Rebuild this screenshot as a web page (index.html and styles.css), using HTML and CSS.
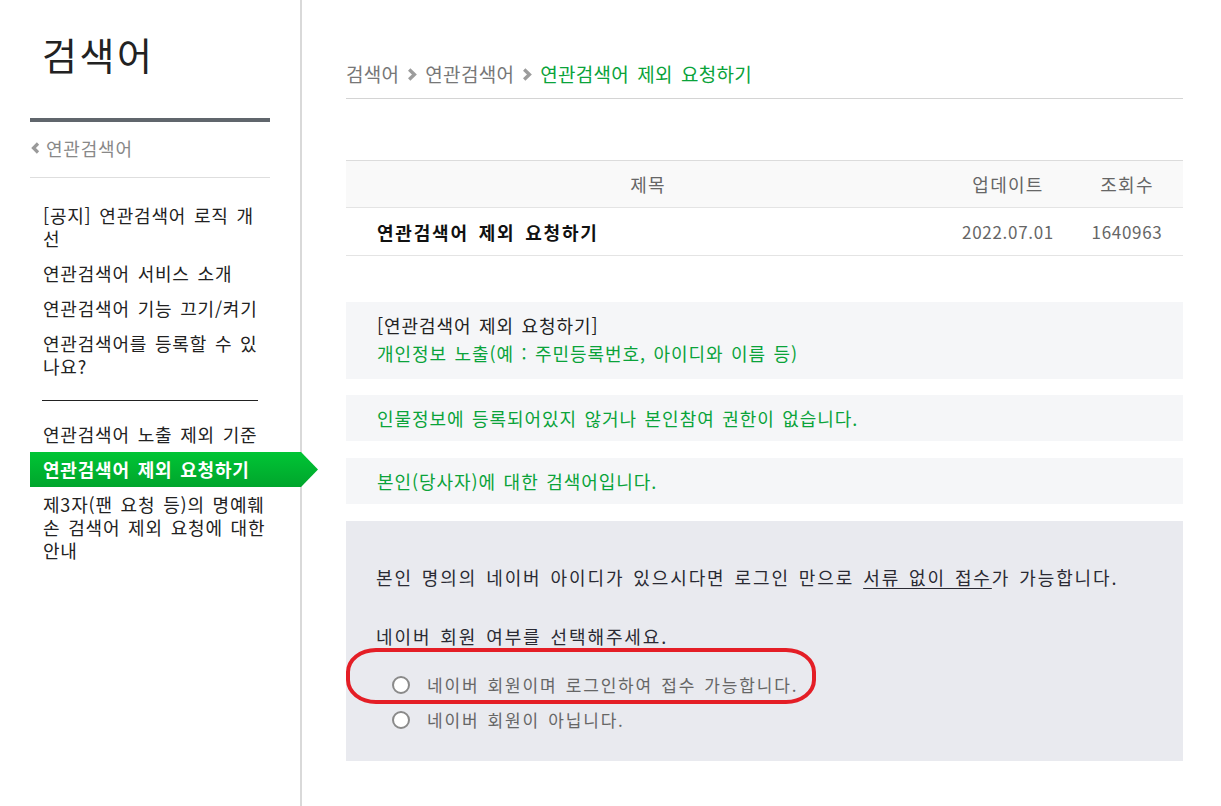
FILE: index.html
```html
<!DOCTYPE html>
<html lang="ko">
<head>
<meta charset="utf-8">
<title>연관검색어 제외 요청하기</title>
<link rel="stylesheet" href="styles.css">
</head>
<body>
<div class="page">
  <aside class="sidebar">
    <h1 class="side-title">검색어</h1>
    <a class="side-back" href="#">
      <svg class="back-icon" width="9" height="12" viewBox="0 0 9 12"><path d="M7 1.5 L2.5 6 L7 10.5" fill="none" stroke="#9a9a9a" stroke-width="3.2"/></svg>
      <span>연관검색어</span>
    </a>
    <ul class="side-menu">
      <li class="side-item">[공지] 연관검색어 로직 개선</li>
      <li class="side-item">연관검색어 서비스 소개</li>
      <li class="side-item">연관검색어 기능 끄기/켜기</li>
      <li class="side-item">연관검색어를 등록할 수 있나요?</li>
    </ul>
    <hr class="side-divider">
    <ul class="side-menu">
      <li class="side-item">연관검색어 노출 제외 기준</li>
      <li class="side-item is-active">연관검색어 제외 요청하기</li>
      <li class="side-item">제3자(팬 요청 등)의 명예훼손 검색어 제외 요청에 대한 안내</li>
    </ul>
  </aside>

  <main class="content">
    <nav class="crumbs">
      <span class="crumb">검색어</span>
      <svg class="crumb-sep" width="10" height="13" viewBox="0 0 10 13"><path d="M2.2 1.5 L7.4 6.5 L2.2 11.5" fill="none" stroke="#9c9c9c" stroke-width="3.4"/></svg>
      <span class="crumb">연관검색어</span>
      <svg class="crumb-sep" width="10" height="13" viewBox="0 0 10 13"><path d="M2.2 1.5 L7.4 6.5 L2.2 11.5" fill="none" stroke="#9c9c9c" stroke-width="3.4"/></svg>
      <span class="crumb crumb-current">연관검색어 제외 요청하기</span>
    </nav>

    <div class="board">
      <div class="board-row board-head">
        <div class="col-title">제목</div>
        <div class="col-date">업데이트</div>
        <div class="col-views">조회수</div>
      </div>
      <div class="board-row board-body">
        <div class="col-title post-title">연관검색어 제외 요청하기</div>
        <div class="col-date num">2022.07.01</div>
        <div class="col-views num">1640963</div>
      </div>
    </div>

    <div class="info-box info-first">
      <p class="info-dark">[연관검색어 제외 요청하기]</p>
      <p class="info-green">개인정보 노출(예 : 주민등록번호, 아이디와 이름 등)</p>
    </div>
    <div class="info-box">
      <p class="info-green">인물정보에 등록되어있지 않거나 본인참여 권한이 없습니다.</p>
    </div>
    <div class="info-box">
      <p class="info-green">본인(당사자)에 대한 검색어입니다.</p>
    </div>

    <div class="member-box">
      <p class="member-lead">본인 명의의 네이버 아이디가 있으시다면 로그인 만으로 <u>서류 없이 접수</u>가 가능합니다.</p>
      <p class="member-ask">네이버 회원 여부를 선택해주세요.</p>
      <div class="radio-row"><span class="radio"></span><span class="radio-label">네이버 회원이며 로그인하여 접수 가능합니다.</span></div>
      <div class="radio-row"><span class="radio"></span><span class="radio-label">네이버 회원이 아닙니다.</span></div>
      <div class="mark-ring"></div>
    </div>
  </main>
</div>
</body>
</html>
```
FILE: styles.css
```css
* { box-sizing: border-box; }
html, body { margin: 0; padding: 0; background: #fff; }
body {
  font-family: "Noto Sans CJK KR", "Noto Sans", sans-serif;
  color: #222;
}
p { margin: 0; }

.page {
  display: flex;
  min-height: 806px;
}

/* ---------- sidebar ---------- */
.sidebar {
  width: 302px;
  flex: none;
  padding-left: 30px;
  border-right: 2px solid #d9d9d9;
}
.side-title {
  margin: 0 0 0 12px;
  padding-top: 32px;
  font-size: 38px;
  font-weight: 400;
  line-height: 43px;
  letter-spacing: 2.5px;
  color: #222;
}
.side-back {
  display: flex;
  align-items: center;
  width: 240px;
  margin-top: 43px;
  padding: 14px 0 17px 1px;
  border-top: 4px solid #60666c;
  border-bottom: 1px solid #dedede;
  font-size: 18px;
  line-height: 24px;
  letter-spacing: 0.8px;
  color: #888;
  text-decoration: none;
}
.back-icon { margin-right: 6px; }

.side-menu {
  list-style: none;
  margin: 20px 0 0;
  padding: 0;
}
.side-item {
  padding: 6px 34px 6px 13px;
  font-size: 18px;
  line-height: 23px;
  letter-spacing: 0.8px;
  word-spacing: 2px;
  color: #222;
}
.side-item.is-active {
  margin-right: -18px;
  padding-right: 52px;
  font-weight: 700;
  color: #fff;
  background: linear-gradient(#00c535, #00a52c);
  clip-path: polygon(0 0, 271px 0, 100% 50%, 271px 100%, 0 100%);
}
.side-divider {
  width: 216px;
  margin: 16px 0 0 12px;
  border: 0;
  border-top: 1px solid #222;
}
.side-divider + .side-menu { margin-top: 16px; }

/* ---------- content ---------- */
.content {
  flex: 1;
  padding: 62px 38px 40px 44px;
}
.crumbs {
  display: flex;
  align-items: center;
  padding-bottom: 12px;
  border-bottom: 1px solid #d4d4d4;
  font-size: 19px;
  line-height: 24px;
  letter-spacing: 0.3px;
  word-spacing: 2.5px;
}
.crumb { color: #777; }
.crumb-current { color: #0aa33a; }
.crumb-sep { margin: 0 8px 0 8px; }

.board { margin-top: 61px; }
.board-row {
  display: grid;
  grid-template-columns: 604px 116px 117px;
  align-items: center;
  height: 48px;
  border-bottom: 1px solid #e4e4e4;
  font-size: 17px;
}
.board-head {
  background: #f9f9f9;
  border-top: 1px solid #dcdcdc;
  font-size: 18px;
  color: #666;
  letter-spacing: 1.3px;
}
.board-head .col-title { text-align: center; }
.col-date, .col-views { text-align: center; }
.col-views { padding-left: 5px; }
.post-title {
  padding-left: 31px;
  font-size: 18px;
  font-weight: 700;
  letter-spacing: 1.8px;
  word-spacing: 3px;
  color: #111;
}
.num { color: #666; letter-spacing: 0.7px; }

.info-box {
  margin-top: 17px;
  padding: 9px 31px 9px;
  background: #f5f6f8;
  font-size: 18px;
  line-height: 28px;
  letter-spacing: 0.95px;
  word-spacing: 1.5px;
}
.info-first { margin-top: 46px; padding-bottom: 12px; }
.info-box + .info-box { margin-top: 16px; }
.info-box + .info-box + .info-box { margin-top: 17px; }
.info-dark { color: #222; }
.info-green { color: #0aa33a; }

.member-box {
  position: relative;
  margin-top: 17px;
  padding: 42px 30px 24px;
  background: #e9eaef;
}
.member-lead {
  font-size: 18px;
  line-height: 28px;
  letter-spacing: 1.9px;
  word-spacing: 2px;
  color: #2a2a33;
}
.member-lead u { text-underline-offset: 3px; }
.member-ask {
  margin-top: 31px;
  font-size: 18px;
  line-height: 28px;
  letter-spacing: 1.9px;
  word-spacing: 2px;
  color: #2a2a33;
  text-decoration: underline;
  text-underline-offset: 4px;
}
.radio-row {
  display: flex;
  align-items: center;
  height: 35px;
  padding-left: 16px;
}
.member-ask + .radio-row { margin-top: 17px; }
.radio {
  width: 18px;
  height: 18px;
  flex: none;
  margin-right: 17px;
  border: 2px solid #8a8a8a;
  border-radius: 50%;
  background: #fff;
}
.radio-label {
  font-size: 17px;
  letter-spacing: 1.85px;
  word-spacing: 1.5px;
  color: #666;
}
.mark-ring {
  position: absolute;
  left: 0;
  top: 127px;
  width: 470px;
  height: 56px;
  border: 4px solid #e41e26;
  border-radius: 30px / 24px;
  pointer-events: none;
}
```
